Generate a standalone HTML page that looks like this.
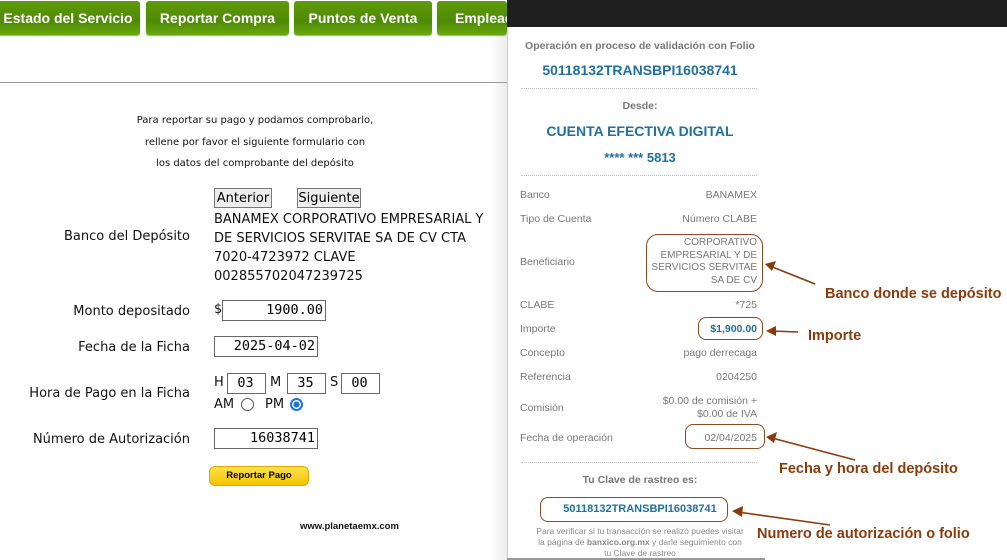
<!DOCTYPE html>
<html><head><meta charset="utf-8"><style>
body{margin:0;width:1007px;height:560px;position:relative;overflow:hidden;background:#fff;font-family:"Liberation Sans",sans-serif}
.a{position:absolute;white-space:nowrap}
.nav{position:absolute;top:1px;height:34px;background:linear-gradient(#5f9a0a,#4e8a05 60%,#6aa80f);border-radius:3px;color:#fff;font-weight:bold;font-size:14px;line-height:34px;text-align:center;box-shadow:0 1px 1px #8a8}
.lbl{position:absolute;font-family:"DejaVu Sans",sans-serif;font-size:13px;color:#111;text-align:right;right:817px;white-space:nowrap}
.f{font-family:"DejaVu Sans",sans-serif;font-size:13px;color:#111}
.inp{position:absolute;border:1px solid #666;background:#fff;font-family:"DejaVu Sans Mono",monospace;font-size:13.5px;line-height:19px;text-align:right;padding-right:2px;box-sizing:border-box;height:21px}
.btn{position:absolute;border:1px solid #777;background:#eee;font-family:"DejaVu Sans",sans-serif;font-size:13px;height:20px;line-height:19px;text-align:center;box-sizing:border-box}
.g{color:#777;font-size:10.5px}
.r{position:absolute;font-size:10.5px;color:#777;text-align:right;right:250px;white-space:nowrap}
.l{position:absolute;font-size:10.5px;color:#777;left:520px}
.bx{position:absolute;border:1.5px solid #8a4a24;border-radius:8px;box-sizing:border-box}
.an{position:absolute;color:#8b3a0c;font-weight:bold;font-size:14.5px;white-space:nowrap}
.dot{position:absolute;left:521px;width:236px;border-top:1px dotted #bbb}
</style></head><body>
<div class="a" style="left:490px;top:35px;width:17px;height:525px;background:linear-gradient(90deg,#fff,#ececec)"></div>
<div class="nav" style="left:-4px;width:144px">Estado del Servicio</div>
<div class="nav" style="left:146px;width:143px">Reportar Compra</div>
<div class="nav" style="left:294px;width:138px">Puntos de Venta</div>
<div class="nav" style="left:437px;width:70px;text-align:left;padding-left:18px;box-sizing:border-box;overflow:hidden">Empleados</div>
<div class="a" style="left:0;top:82px;width:507px;height:1px;background:#999"></div>
<div class="a f" style="left:0;width:510px;text-align:center;top:110px;font-size:10px;line-height:21.5px;white-space:normal">Para reportar su pago y podamos comprobarlo,<br>rellene por favor el siguiente formulario con<br>los datos del comprobante del depósito</div>
<div class="btn" style="left:214px;top:188px;width:58px">Anterior</div>
<div class="btn" style="left:297px;top:188px;width:64px">Siguiente</div>
<div class="a f" style="left:214px;top:210px;line-height:19px">BANAMEX CORPORATIVO EMPRESARIAL Y<br>DE SERVICIOS SERVITAE SA DE CV CTA<br>7020-4723972 CLAVE<br>002855702047239725</div>
<div class="lbl" style="top:229px">Banco del Depósito</div>
<div class="lbl" style="top:304px">Monto depositado</div>
<div class="f a" style="left:214px;top:302px">$</div>
<div class="inp" style="left:222px;top:300px;width:104px">1900.00</div>
<div class="lbl" style="top:340px">Fecha de la Ficha</div>
<div class="inp" style="left:214px;top:336px;width:104px">2025-04-02</div>
<div class="lbl" style="top:386px">Hora de Pago en la Ficha</div>
<div class="f a" style="left:214px;top:375px">H</div>
<div class="inp" style="left:227px;top:373px;width:39px;text-align:center">03</div>
<div class="f a" style="left:270px;top:375px">M</div>
<div class="inp" style="left:287px;top:373px;width:39px;text-align:center">35</div>
<div class="f a" style="left:330px;top:375px">S</div>
<div class="inp" style="left:341px;top:373px;width:39px;text-align:center">00</div>
<div class="f a" style="left:214px;top:397px">AM</div>
<div class="a" style="left:241px;top:398px;width:11px;height:11px;border:1px solid #555;border-radius:50%"></div>
<div class="f a" style="left:265px;top:397px">PM</div>
<div class="a" style="left:290px;top:398px;width:9px;height:9px;border:2px solid #1a73e8;border-radius:50%;background:radial-gradient(#1a73e8 45%,#fff 50%)"></div>
<div class="lbl" style="top:432px">Número de Autorización</div>
<div class="inp" style="left:214px;top:428px;width:104px">16038741</div>
<div class="a" style="left:209px;top:466px;width:98px;height:18px;border-radius:6px;background:linear-gradient(#ffe14a,#f5c400);border:1px solid #e0a800;font-size:9.5px;font-weight:bold;text-align:center;line-height:18px">Reportar Pago</div>
<div class="a" style="left:300px;top:521px;font-size:9.5px;font-weight:bold;color:#111">www.planetaemx.com</div>

<div class="a" style="left:507px;top:0;width:500px;height:27px;background:#1f1f1f"></div>
<div class="a" style="left:507px;top:27px;width:1px;height:533px;background:#ccc"></div>
<div class="a" style="left:507px;top:558px;width:258px;height:2px;background:#999"></div>
<div class="a g" style="left:507px;width:266px;text-align:center;top:40px;font-weight:bold">Operación en proceso de validación con Folio</div>
<div class="a" style="left:507px;width:266px;text-align:center;top:62px;color:#1f6fa0;font-size:14px;font-weight:bold">50118132TRANSBPI16038741</div>
<div class="dot" style="top:88px"></div>
<div class="a g" style="left:507px;width:266px;text-align:center;top:100px;font-weight:bold">Desde:</div>
<div class="a" style="left:507px;width:266px;text-align:center;top:123px;color:#1f6fa0;font-size:14px;font-weight:bold">CUENTA EFECTIVA DIGITAL</div>
<div class="a" style="left:507px;width:266px;text-align:center;top:150px;color:#1f6fa0;font-size:13px;font-weight:bold">**** *** 5813</div>
<div class="dot" style="top:175px"></div>
<div class="l" style="top:189px">Banco</div><div class="r" style="top:189px">BANAMEX</div>
<div class="l" style="top:213px">Tipo de Cuenta</div><div class="r" style="top:213px">Número CLABE</div>
<div class="l" style="top:256px">Beneficiario</div>
<div class="r" style="top:237px;line-height:12.7px;font-size:10px">CORPORATIVO<br>EMPRESARIAL Y DE<br>SERVICIOS SERVITAE<br>SA DE CV</div>
<div class="l" style="top:299px">CLABE</div><div class="r" style="top:299px">*725</div>
<div class="l" style="top:323px">Importe</div><div class="r" style="top:323px;color:#1f6fa0;font-weight:bold">$1,900.00</div>
<div class="l" style="top:347px">Concepto</div><div class="r" style="top:347px">pago derrecaga</div>
<div class="l" style="top:371px">Referencia</div><div class="r" style="top:371px">0204250</div>
<div class="l" style="top:402px">Comisión</div><div class="r" style="top:395px;line-height:13px">$0.00 de comisión +<br>$0.00 de IVA</div>
<div class="l" style="top:432px">Fecha de operación</div><div class="r" style="top:432px">02/04/2025</div>
<div class="dot" style="top:462px"></div>
<div class="a g" style="left:507px;width:266px;text-align:center;top:474px;font-weight:bold">Tu Clave de rastreo es:</div>
<div class="a" style="left:507px;width:266px;text-align:center;top:503px;color:#1f6fa0;font-size:11px;font-weight:bold">50118132TRANSBPI16038741</div>
<div class="a" style="left:535px;width:210px;text-align:center;top:526px;color:#888;font-size:8.5px;line-height:11px;white-space:normal">Para verificar si tu transacción se realizó puedes visitar la página de <b>banxico.org.mx</b> y darle seguimiento con tu Clave de rastreo</div>

<div class="bx" style="left:646px;top:234px;width:117px;height:58px;border-radius:12px"></div>
<div class="bx" style="left:698px;top:317px;width:65px;height:23px"></div>
<div class="bx" style="left:685px;top:424px;width:80px;height:25px"></div>
<div class="bx" style="left:540px;top:497px;width:188px;height:25px"></div>
<div class="an" style="left:825px;top:286px">Banco donde se depósito</div>
<div class="an" style="left:808px;top:328px">Importe</div>
<div class="an" style="left:779px;top:461px">Fecha y hora del depósito</div>
<div class="an" style="left:757px;top:526px">Numero de autorización o folio</div>
<svg class="a" style="left:0;top:0" width="1007" height="560">
<g stroke="#8b3a0c" stroke-width="1.6" fill="#8b3a0c">
<line x1="815" y1="284" x2="770" y2="266"/><polygon points="765,264 776,261 772,271" stroke="none"/>
<line x1="798" y1="332" x2="772" y2="331"/><polygon points="766,331 776,326 776,336" stroke="none"/>
<line x1="855" y1="460" x2="772" y2="438"/><polygon points="766,437 777,432 774,443" stroke="none"/>
<line x1="830" y1="525" x2="738" y2="512"/><polygon points="732,511 743,506 742,517" stroke="none"/>
</g></svg>
</body></html>
